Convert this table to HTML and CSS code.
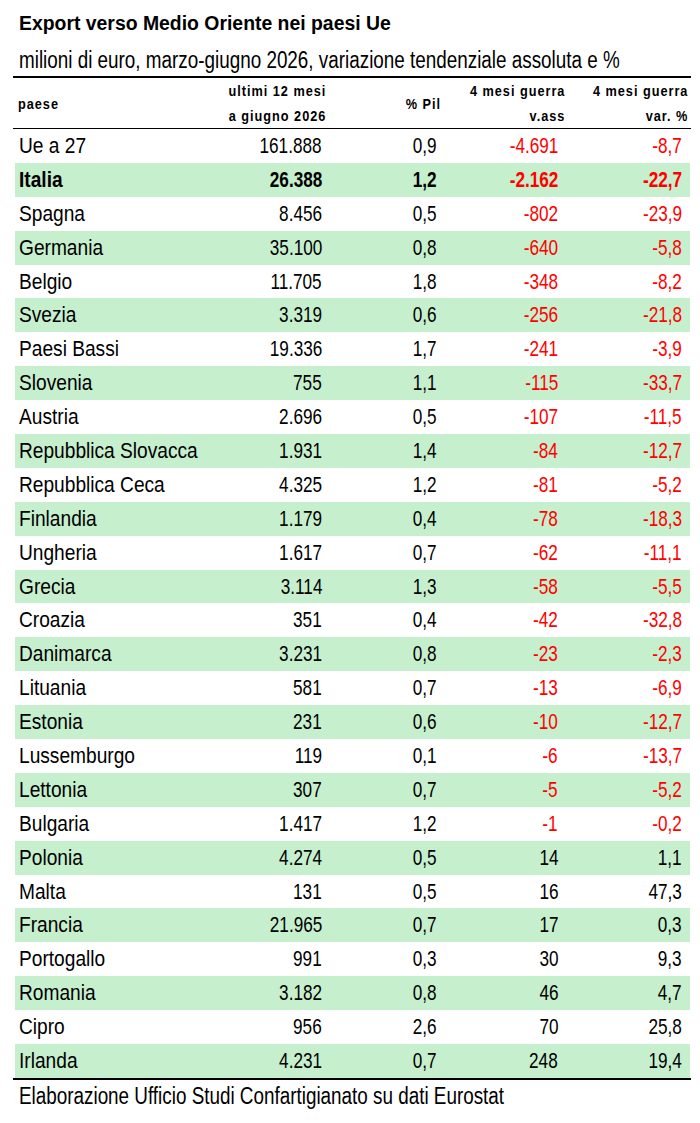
FILE: index.html
```html
<!DOCTYPE html>
<html lang="it">
<head>
<meta charset="utf-8">
<title>Export verso Medio Oriente nei paesi Ue</title>
<link rel="stylesheet" href="styles.css">
</head>
<body>
<div class="page">
  <div class="title">Export verso Medio Oriente nei paesi Ue</div>
  <div class="subtitle"><span class="nl">milioni di euro, marzo-giugno 2026, variazione tendenziale assoluta e %</span></div>
  <div class="table">
    <div class="head">
      <div class="h c1 mid"><span class="nl">paese</span></div>
      <div class="h c2"><span class="nr">ultimi 12 mesi<br>a giugno 2026</span></div>
      <div class="h c3 mid"><span class="nr">% Pil</span></div>
      <div class="h c4"><span class="nr">4 mesi guerra<br>v.ass</span></div>
      <div class="h c5"><span class="nr">4 mesi guerra<br>var. %</span></div>
    </div>
    <div id="rows"></div>
  </div>
  <div class="footer"><span class="nl">Elaborazione Ufficio Studi Confartigianato su dati Eurostat</span></div>
</div>
<script src="app.js"></script>
</body>
</html>
```
FILE: app.js
```js
const data = [
  ["Ue a 27","161.888","0,9","-4.691","-8,7"],
  ["Italia","26.388","1,2","-2.162","-22,7"],
  ["Spagna","8.456","0,5","-802","-23,9"],
  ["Germania","35.100","0,8","-640","-5,8"],
  ["Belgio","11.705","1,8","-348","-8,2"],
  ["Svezia","3.319","0,6","-256","-21,8"],
  ["Paesi Bassi","19.336","1,7","-241","-3,9"],
  ["Slovenia","755","1,1","-115","-33,7"],
  ["Austria","2.696","0,5","-107","-11,5"],
  ["Repubblica Slovacca","1.931","1,4","-84","-12,7"],
  ["Repubblica Ceca","4.325","1,2","-81","-5,2"],
  ["Finlandia","1.179","0,4","-78","-18,3"],
  ["Ungheria","1.617","0,7","-62","-11,1"],
  ["Grecia","3.114","1,3","-58","-5,5"],
  ["Croazia","351","0,4","-42","-32,8"],
  ["Danimarca","3.231","0,8","-23","-2,3"],
  ["Lituania","581","0,7","-13","-6,9"],
  ["Estonia","231","0,6","-10","-12,7"],
  ["Lussemburgo","119","0,1","-6","-13,7"],
  ["Lettonia","307","0,7","-5","-5,2"],
  ["Bulgaria","1.417","1,2","-1","-0,2"],
  ["Polonia","4.274","0,5","14","1,1"],
  ["Malta","131","0,5","16","47,3"],
  ["Francia","21.965","0,7","17","0,3"],
  ["Portogallo","991","0,3","30","9,3"],
  ["Romania","3.182","0,8","46","4,7"],
  ["Cipro","956","2,6","70","25,8"],
  ["Irlanda","4.231","0,7","248","19,4"]
];
const rows = document.getElementById("rows");
data.forEach((r, i) => {
  const row = document.createElement("div");
  row.className = "row" + (i % 2 === 1 ? " green" : "") + (r[0] === "Italia" ? " bold" : "");
  r.forEach((v, j) => {
    const cell = document.createElement("div");
    cell.className = "c c" + (j + 1) + (j >= 3 && v.startsWith("-") ? " neg" : "");
    const span = document.createElement("span");
    span.className = j === 0 ? "nl name" : "nr num";
    span.textContent = v;
    cell.appendChild(span);
    row.appendChild(cell);
  });
  rows.appendChild(row);
});
```
FILE: styles.css
```css
html, body {
  margin: 0;
  padding: 0;
  background: #ffffff;
}
.page {
  width: 700px;
  padding: 11px 9px 0 13px;
  box-sizing: border-box;
  color: #000;
  font-family: "Liberation Sans", Arial, sans-serif;
  overflow: hidden;
}
/* narrow (Arial Narrow-like) text */
.nl, .nr {
  display: inline-block;
  white-space: nowrap;
  transform: scaleX(0.82);
}
.nl {
  transform-origin: left center;
}
.nr {
  transform-origin: right center;
  text-align: right;
}
.name {
  transform: scaleX(0.87);
}
.num {
  transform: scaleX(0.78);
}
.title {
  font-weight: bold;
  font-size: 19.4px;
  line-height: 24px;
  padding-left: 6px;
}
.subtitle {
  font-size: 23px;
  line-height: 32px;
  margin-top: 9px;
  padding-left: 6px;
  white-space: nowrap;
  overflow: hidden;
}
.table {
  width: 678px;
  border-top: 2px solid #000;
  border-bottom: 2px solid #000;
}
.head, .row {
  display: grid;
  grid-template-columns: 187px 129px 115px 124px 123px;
}
.head {
  height: 50px;
  border-bottom: 1.5px solid #000;
}
.h {
  font-weight: bold;
  font-size: 15.5px;
  line-height: 25px;
  letter-spacing: 1.2px;
  text-align: right;
  padding-right: 3px;
}
.h.mid {
  display: flex;
  align-items: center;
  justify-content: flex-end;
}
.h.c1 {
  justify-content: flex-start;
  padding-left: 5px;
}
.row {
  height: 33.9px;
  align-items: center;
  font-size: 22px;
  margin: 0 1px 0 2px;
}
.row.green {
  background: #c6efce;
}
.row.bold {
  font-weight: bold;
}
.c {
  text-align: right;
  white-space: nowrap;
}
.c.c1 {
  text-align: left;
  padding-left: 4px;
}
.c.c2 { padding-right: 9px; }
.c.c3 { padding-right: 9px; }
.c.c4 { padding-right: 12px; }
.c.c5 { padding-right: 11px; }
.neg {
  color: #ff0000;
}
.footer {
  font-size: 23px;
  line-height: 30px;
  padding-left: 6px;
  margin-top: 1px;
}
```
